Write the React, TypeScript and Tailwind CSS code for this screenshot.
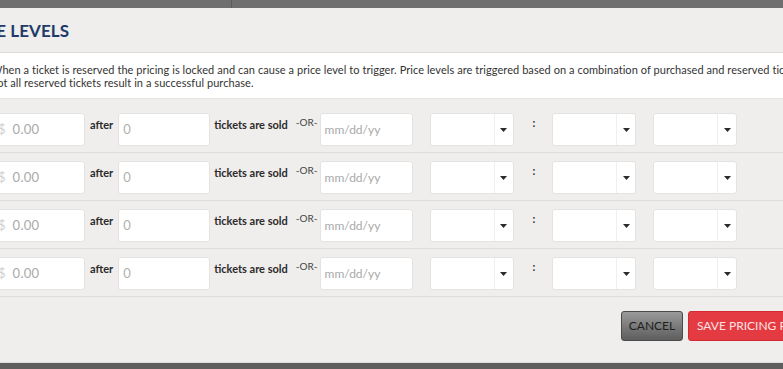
import React from 'react';

const font = { fontFamily: 'Lato, "Open Sans", sans-serif' };

const Select: React.FC = () => (
  <div className="flex h-[33px] w-[84px] rounded-[3px] border border-[#e4e3e1] bg-white">
    <div className="flex-1" />
    <div className="flex w-[19px] items-center justify-center border-l border-[#efefef]">
      <svg width="7" height="4" viewBox="0 0 7 4">
        <path d="M0 0h7L3.5 4z" fill="#2a2a2a" />
      </svg>
    </div>
  </div>
);

const Row: React.FC = () => (
  <div className="flex h-[48px] items-start border-b border-[#dedddb] pt-[8px] text-[11px]">
    <div className="ml-[-12px] flex h-[33px] w-[97px] items-center rounded-[3px] border border-[#e4e3e1] bg-white pl-[9px] text-[13px]">
      <span className="text-[#cfcfcf]">$</span>
      <span className="ml-[7px] tracking-[0.3px] text-[#a9a9a9]">0.00</span>
    </div>
    <span className="ml-[5px] pt-[4px] font-bold text-[#2b2b2b]">after</span>
    <div className="ml-[5px] flex h-[33px] w-[92px] items-center rounded-[3px] border border-[#e4e3e1] bg-white pl-[4px] text-[13px] text-[#b0b0b0]">
      0
    </div>
    <span className="ml-[4px] pt-[4px] font-bold text-[#2b2b2b]">tickets are sold</span>
    <span className="ml-[8px] pt-[2px] text-[10px] text-[#444]">-OR-</span>
    <div className="ml-[2px] flex h-[33px] w-[93px] items-center rounded-[3px] border border-[#e4e3e1] bg-white pl-[4px] text-[12px] text-[#a9a9a9]">
      mm/dd/yy
    </div>
    <div className="ml-[17px]">
      <Select />
    </div>
    <span className="ml-[19px] mr-[17px] pt-[2px] font-bold text-[#333]">:</span>
    <Select />
    <div className="ml-[17px]">
      <Select />
    </div>
  </div>
);

export default function App() {
  return (
    <div className="flex h-[369px] w-[783px] flex-col overflow-hidden bg-[#efeeec]" style={font}>
      <div className="flex h-[8px] shrink-0 bg-[#6f6f6f]">
        <div className="w-[232px] border-r border-[#5c5c5c]" />
      </div>
      <div className="flex h-[45px] shrink-0 items-center border-b border-[#dcdbd9]">
        <h2 className="ml-[-42px] pt-[1px] text-[17px] font-bold tracking-[0.1px] text-[#1e3a68]">PRICE LEVELS</h2>
      </div>
      <div className="h-[46px] shrink-0 border-b border-[#e6e5e3] bg-white pt-[10px]">
        <p className="ml-[-9px] whitespace-nowrap text-[11px] leading-[13px] tracking-[0.06px] text-[#333]">
          When a ticket is reserved the pricing is locked and can cause a price level to trigger. Price levels are triggered based on a combination of purchased and reserved tickets,
          <br />
          not all reserved tickets result in a successful purchase.
        </p>
      </div>
      <div className="shrink-0 pt-[6px]">
        <Row />
        <Row />
        <Row />
        <Row />
      </div>
      <div className="flex shrink-0 justify-end pt-[14px]">
        <div className="flex w-[162px] shrink-0 gap-[5px]">
          <button className="h-[30px] w-[62px] shrink-0 rounded-[3px] border border-[#4a4a4a] bg-gradient-to-b from-[#9a9a9a] to-[#5e5e5e] text-[12px] text-[#1e1e1e]">
            CANCEL
          </button>
          <button className="h-[30px] w-[130px] shrink-0 whitespace-nowrap rounded-[3px] border border-[#d22a31] bg-[#e43b42] pl-[8px] text-left text-[12px] text-[#fde3e3]">
            SAVE PRICING PLAN
          </button>
        </div>
      </div>
      <div className="mt-auto h-[7px] shrink-0 border-t border-[#e0dfdd] bg-[#5e5e5e]" />
    </div>
  );
}
